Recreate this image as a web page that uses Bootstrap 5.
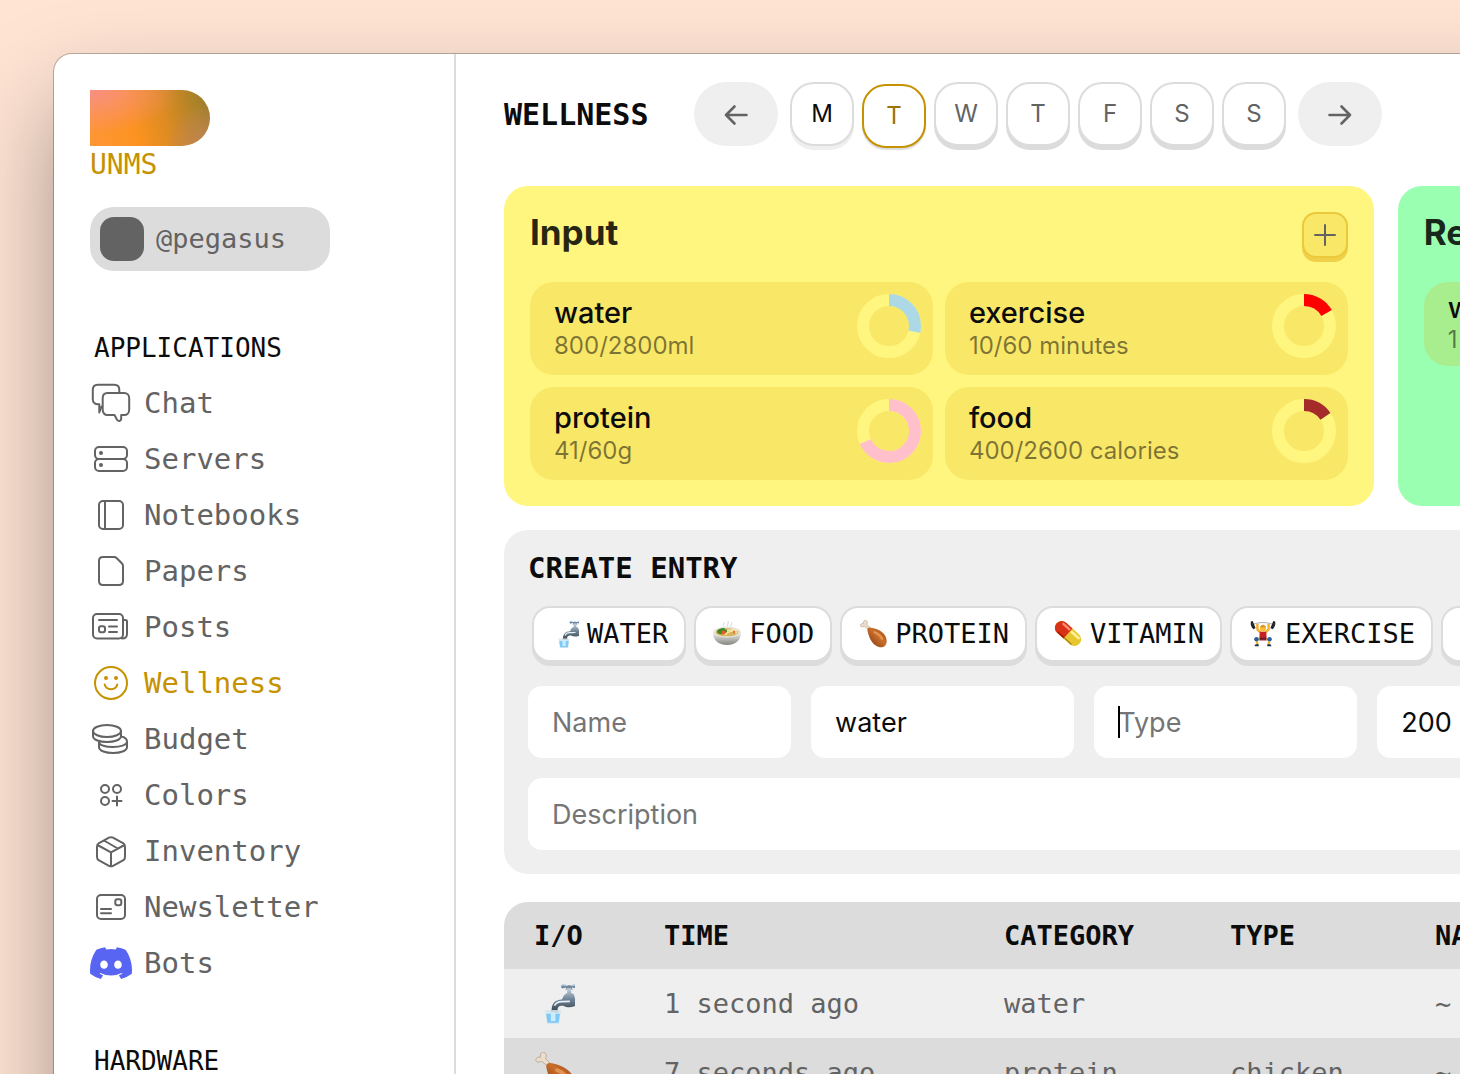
<!DOCTYPE html>
<html lang="en">
<head>
<meta charset="utf-8">
<meta name="viewport" content="width=device-width, initial-scale=1">
<title>Wellness</title>
<link href="https://cdn.jsdelivr.net/npm/bootstrap@5.3.0/dist/css/bootstrap.min.css" rel="stylesheet">
<style>
:root{--ink:#0c0c0c;--soft:#636363;--gold:#c69200;--line:#dcdcdc;--panel:#efefef}
html,body{height:100%}
body{background:#ffe4d4;color:var(--ink);font-family:Inter,"Liberation Sans",sans-serif;overflow:hidden}
.mono{font-family:"DejaVu Sans Mono","Liberation Mono",monospace}
/* the window runs past the right and bottom edges of the desktop */
.app-window{margin:54px 0 0 54px;width:154.9vw;min-height:calc(100vh + 100px);background:#fff;border-radius:18px 0 0 0;box-shadow:0 0 0 1px rgba(0,0,0,.25),0 48px 96px rgba(0,0,0,.36)}
.side-bar{width:402px;border-right:2px solid var(--line);padding:36px 36px 0}
.brand-shape{width:120px;height:56px;border-radius:0 28px 28px 0;background:radial-gradient(circle at 100% 100%,rgba(196,133,96,.9),transparent 34%),radial-gradient(ellipse 75% 80% at 0 0,#f8907d 8%,transparent),linear-gradient(75deg,#ff9634 5%,#fb921f 38%,#dc8b22 62%,#a98227 88%,#96782f)}
.brand-name{font-size:28px;line-height:38px;color:var(--gold)}
.user-pill{width:240px;height:64px;border-radius:24px;background:var(--line);color:var(--soft);font-size:27px;padding:10px;margin-top:23px}
.user-face{width:44px;height:44px;border-radius:14px;background:var(--soft)}
.side-title{font-size:26px;line-height:32px;font-weight:400;margin:0 4px 11px;padding-top:61px}
.side-title.hardware{padding-top:54px}
.side-nav .nav-link{font-size:29px;line-height:32px;height:56px;padding:0;color:var(--soft);gap:12px}
.side-nav .nav-link.active{color:var(--gold)}
.side-nav svg{width:42px;height:42px;fill:none;stroke:currentColor;stroke-width:2;stroke-linejoin:round;stroke-linecap:round}
.side-nav svg .solid{fill:currentColor;stroke:none}
.main-area{padding:28px 48px 0}
.page-title{font-size:30px;line-height:36px;font-weight:700;width:190px;padding-top:2px}
.arrow-btn{width:84px;height:64px;border:0;border-radius:32px;background:var(--panel);color:var(--soft)}
.arrow-btn svg,.add-btn svg{fill:none;stroke:currentColor;stroke-linecap:round;stroke-linejoin:round}
.day-btn{width:64px;height:64px;border:2px solid var(--line);border-radius:24px;background:#fff;color:var(--soft);font-size:24px;line-height:28px;padding:0;box-shadow:0 4px 0 var(--line)}
.day-btn.past{color:var(--ink);box-shadow:0 4px 0 var(--panel)}
.day-btn.current{color:#9d7400;border-color:var(--gold);box-shadow:0 2px 1px var(--line);transform:translateY(2px)}
.goal-card{border-radius:24px;padding:26px;height:320px}
.goal-card.yellow{background:#fff67f}
.goal-card.green{background:#9bffb1}
.goal-head{height:70px}
.goal-head h2{font-size:35px;line-height:40px;font-weight:700;color:rgba(0,0,0,.86);margin:0}
.add-btn{width:46px;height:46px;border:2px solid #ecc83b;border-radius:14px;background:#f9e768;color:var(--soft);padding:0;box-shadow:0 4px 0 #f0d048}
.goal-grid{display:grid;grid-template-columns:1fr 1fr;gap:12px}
.goal-item{border-radius:24px;background:#f9e768;padding:12px 12px 12px 24px;min-height:93px}
.goal-name{font-size:29px;line-height:38px;font-weight:500}
.goal-value{font-size:24px;line-height:28px;color:rgba(0,0,0,.5)}
.green .goal-item{background:#a8ee8f;min-height:84px;padding:10px 24px}
.green .goal-name{line-height:32px}
.green .goal-value{line-height:32px}
.entry-panel{background:var(--panel);border-radius:24px;padding:20px 24px 24px}
.entry-panel h2{font-size:29px;line-height:36px;font-weight:700;margin:0 0 20px}
.chip-btn{height:56px;border:2px solid var(--line);border-radius:18px;background:#fff;color:var(--ink);font-size:27px;line-height:32px;padding:0 16px 0 17px;box-shadow:0 4px 0 var(--line)}
.chip-btn svg{width:28px;height:28px}
.entry-fields{display:grid;grid-template-columns:repeat(5,1fr) 300px;gap:20px}
.entry-fields .form-control{height:72px;border:0;border-radius:14px;padding:0 24px;font-size:27px;color:var(--ink);background:#fff;box-shadow:none}
.entry-fields .form-control::placeholder{color:#757575}
.wide-field{grid-column:1/-1}
.text-caret{position:absolute;left:24px;top:20px;width:2px;height:32px;background:#000}
.log-wrap{border-radius:24px 24px 0 0;overflow:hidden}
.log-table{table-layout:fixed;width:100%;font-size:27px;line-height:36px;color:var(--soft)}
.log-table th,.log-table td{padding:0 30px;white-space:nowrap}
.log-table thead tr{height:67px;background:var(--line);color:var(--ink)}
.log-table tbody tr{height:69px;background:var(--panel)}
.log-table tbody tr:nth-child(even){background:var(--line)}
.log-table svg{width:41px;height:41px;display:block}
.c1{width:130px}.c2{width:340px}.c3{width:226px}.c4{width:205px}
</style>
<script src="https://cdn.jsdelivr.net/npm/bootstrap@5.3.0/dist/js/bootstrap.bundle.min.js"></script>
</head>
<body>
<svg class="position-absolute" width="0" height="0" aria-hidden="true">
 <defs>
  <linearGradient id="gSteel" x1="0" y1="0" x2="0" y2="1"><stop offset="0" stop-color="#c3d3e2"/><stop offset=".5" stop-color="#6f8396"/><stop offset="1" stop-color="#3d4750"/></linearGradient>
  <linearGradient id="gMeat" x1="0" y1="1" x2="1" y2="0"><stop offset="0" stop-color="#7c2f0b"/><stop offset=".55" stop-color="#c96f2c"/><stop offset="1" stop-color="#a04a16"/></linearGradient>
  <linearGradient id="gBowl" x1="0" y1="0" x2="0" y2="1"><stop offset="0" stop-color="#f2f2f0"/><stop offset="1" stop-color="#85857f"/></linearGradient>
 </defs>
 <symbol id="tap" viewBox="-4 0 28 28">
  <path d="M15 4.500h2l1-.5v-1l-2 .6c-2 .6-2-2.600 0-2.200l2.500.5 1.500-.5 1.500.5 2.500-.5c2-.4 2 2.800 0 2.200l-2-.6v1l1 .5" fill="#71889e"/>
  <path d="M15 1.300h2.500M22.500 1.300H25" stroke="#b5cce4" stroke-width="1"/>
  <path d="M18.500 3.500h3l-.2 3.200 2 1.200.7 2.600H29v5.400h-5.500c-2.500 1-5 1-7.500-.4-3-.2-3.800.6-4 3.500H8c0-4.800 2.200-7.500 7-7.700l1.500-3 2.200-1.600z" fill="url(#gSteel)"/>
  <path d="M10 15.500c1-2.300 3-3 5.500-2.800l5-.2" stroke="#e6f1fb" stroke-width="1.200" fill="none"/>
  <path d="M7.500 18.500h5v1.800h-5z" fill="#606c78"/><path d="M9 20h2.500v4H9z" fill="#9dd5fa"/>
  <path d="M3.500 18.500h11L13.200 28H4.900z" fill="#d5e5ed" opacity=".85"/><path d="M4.300 21h9.400l-.9 6.200H5.200z" fill="#7ec9f5"/><path d="M7.500 20h3.200v6H7.500z" fill="#c9ecff"/>
 </symbol>
 <symbol id="bowl" viewBox="0 0 28 28">
  <path d="M11 7c-2-2 1-3 0-5M15 7c-2-2 1-3 0-6M18.500 7c-2-2 1-3 0-5" stroke="#d6d6d6" fill="none"/>
  <path d="M0 12c0 8 5 13 14 13s14-5 14-13z" fill="url(#gBowl)"/><ellipse cx="14" cy="12" rx="14" ry="5.400" fill="#e8e7e2"/>
  <ellipse cx="14" cy="12.300" rx="11.500" ry="4" fill="#d9b35f"/><path d="M10 14c4-5 10-5 14-3M12 15c3-4 8-5 12-2" stroke="#fbe8ad" stroke-width="1.400" fill="none"/>
  <path d="M4 12c0-2.500 2-3 3.500-3.500 2-.9 4-.6 5 1 2 .4 2 2.500.5 3-2 2.400-8 2.400-9-.5z" fill="#43872a"/><circle cx="10.500" cy="12.500" r="1.900" fill="#e36322"/><circle cx="21" cy="12" r="1.300" fill="#d77434"/>
 </symbol>
 <symbol id="leg" viewBox="-1 0 28.500 28.500">
  <path d="M8.500 9.800 4.300 6.500C1.500 8-.8 6.300.8 4.300 2 3 3 3.700 3.500 3.800 3 1 5-.8 6.600.5c1.500 1.400.8 2.900.5 4.200L10.500 8z" fill="#e9ddcb" stroke="#b7a58f" stroke-width=".6"/>
  <path d="M7.500 10c0-1.500 1-2.600 2.700-2.400 6 .8 13.500 3.700 16 9.500 1.500 4 1.200 6.900-.7 9-2.300 2.300-6 2.200-9 .2C11 23 8.500 16 7.500 10z" fill="url(#gMeat)"/>
  <path d="M15 12.500c4 1.500 6 3.500 7.500 6.500" stroke="#efa563" stroke-width="2.500" stroke-linecap="round" fill="none" opacity=".7"/>
 </symbol>
 <symbol id="pill" viewBox="-1.500 -1 31 31">
  <g transform="rotate(42 14 14)"><rect x="-3" y="6.500" width="34" height="15" rx="7.500" fill="#e7c62f"/><path d="M14 6.500H4.500a7.500 7.500 0 0 0 0 15H14z" fill="#d83217"/><path d="M3 9.500h9" stroke="#ff8f78" stroke-width="2.500" stroke-linecap="round"/><path d="M16 10h10" stroke="#fff29a" stroke-width="3" stroke-linecap="round"/><path d="M4 20.300h10" stroke="#9d1d0c" stroke-width="1.500"/><path d="M14 20.300h11" stroke="#a98912" stroke-width="1.500"/></g>
 </symbol>
 <symbol id="lift" viewBox="-1 0 30 30">
  <path d="M3 5c6-3 16-3 22 0" stroke="#a2a7ab" fill="none"/><path d="M1 1.500 3 1l3 7.500-2 1.500C1.500 8 .3 5 1 1.500zM27 1.500 25 1l-3 7.500 2 1.500c2.500-2 3.700-5 3-8.500z" fill="#24272c"/>
  <path d="M8 4v6l4 4M20 4v6l-4 4" stroke="#f4b02b" stroke-width="2.600" fill="none" stroke-linejoin="round"/><circle cx="14" cy="9" r="3.200" fill="#f8bd34"/><path d="M11 8c0-4 6-4 6 0z" fill="#e0942a"/>
  <path d="M10.500 12.500h7L18 22h-8z" fill="#c42127"/><path d="M10.500 19h7v2h-7z" fill="#5d2028"/><path d="M10 20.500H6.500l1.700 5.500M18 20.500h3.500L19.800 26" stroke="#f4b02b" stroke-width="2.400" fill="none"/><circle cx="7" cy="20.500" r="2.400" fill="#2461a4"/><circle cx="21" cy="20.500" r="2.400" fill="#2461a4"/>
  <path d="M5 28c0-2 3-3 4.500-1.500V28zM23 28c0-2-3-3-4.500-1.500V28z" fill="#2a3140"/>
 </symbol>
</svg>

<div class="app-window d-flex">
 <aside class="side-bar mono flex-shrink-0">
  <a href="#" class="d-block text-decoration-none"><div class="brand-shape"></div><div class="brand-name">UNMS</div></a>
  <a href="#" class="user-pill d-flex align-items-center gap-2 text-decoration-none"><span class="user-face me-1"></span>@pegasus</a>
  <h2 class="side-title">APPLICATIONS</h2>
  <nav class="side-nav nav flex-column">
   <a class="nav-link d-flex align-items-center" href="#"><svg viewBox="0 0 42 42"><path d="M11.500 24.500 9.300 30.500V22.300H8c-3 0-5.200-2-5.200-5V7.700c0-3 2-5 5-5h16.500c3 0 5 2 5 5v3.300"/><path d="M17.500 11h16.700c3 0 5 2.200 5 5.200v11.500c0 3-2 5.300-5 5.300h-3v3.300c0 3.300-3.400 3.700-4.700.5L24.500 33h-7c-3 0-4.800-2.300-4.800-5.300V16.200c0-3 1.800-5.200 4.800-5.200z"/></svg>Chat</a>
   <a class="nav-link d-flex align-items-center" href="#"><svg viewBox="0 0 42 42"><rect x="5" y="9" width="32" height="12" rx="4"/><rect x="5" y="21" width="32" height="12" rx="4"/><circle class="solid" cx="11" cy="15" r="2"/><circle class="solid" cx="11" cy="27" r="2"/></svg>Servers</a>
   <a class="nav-link d-flex align-items-center" href="#"><svg viewBox="0 0 42 42"><rect x="9" y="7" width="24" height="28" rx="4"/><path d="M15 7v28"/></svg>Notebooks</a>
   <a class="nav-link d-flex align-items-center" href="#"><svg viewBox="0 0 42 42"><path d="M13 7h11c1 0 2 .4 2.800 1.200l5 5c.8.800 1.200 1.800 1.200 2.800v15c0 2.500-1.500 4-4 4H13c-2.500 0-4-1.500-4-4V11c0-2.500 1.500-4 4-4z"/></svg>Papers</a>
   <a class="nav-link d-flex align-items-center" href="#"><svg viewBox="0 0 42 42"><rect x="3" y="8" width="30" height="24.500" rx="4"/><path d="M33 14h2.500c1 0 1.500.6 1.500 1.500V28c0 3-2 4.500-5 4.500M9 14h18M19 20.500h8M19 26h8"/><rect x="9" y="20.300" width="6" height="6" rx="2"/></svg>Posts</a>
   <a class="nav-link active d-flex align-items-center" href="#" aria-current="page"><svg viewBox="0 0 42 42"><circle cx="21" cy="21" r="16"/><circle class="solid" cx="16" cy="16" r="2"/><circle class="solid" cx="26" cy="16" r="2"/><path d="M14.700 22.500c1.600 6.200 11 6.200 12.600 0"/></svg>Wellness</a>
   <a class="nav-link d-flex align-items-center" href="#"><svg viewBox="0 0 42 42"><ellipse cx="17" cy="13" rx="14" ry="6"/><path d="M3 13v5c0 8 28 8 28 0v-5M31 18.300c3.800 1 6 2.700 6 5.200 0 7.300-28 7.300-28 .5M9 24v5c0 8 28 8 28 0v-5.500"/></svg>Budget</a>
   <a class="nav-link d-flex align-items-center" href="#"><svg viewBox="0 0 42 42"><circle cx="15" cy="15" r="4"/><circle cx="27" cy="15" r="4"/><circle cx="15" cy="27" r="4"/><path d="M27 22.500v9M22.500 27h9"/></svg>Colors</a>
   <a class="nav-link d-flex align-items-center" href="#"><svg viewBox="0 0 42 42"><path d="M19 7.700c1.300-.7 2.700-.7 4 0l10 5.500c1.300.8 2 2 2 3.500v10.200c0 1.500-.7 2.700-2 3.400l-10 5.500c-1.300.7-2.700.7-4 0l-10-5.500c-1.300-.7-2-1.900-2-3.400V16.700c0-1.500.7-2.700 2-3.500zM7.500 15 21 22.300 34.500 15M21 22.300v14M14 10.500l13.700 8"/></svg>Inventory</a>
   <a class="nav-link d-flex align-items-center" href="#"><svg viewBox="0 0 42 42"><rect x="7" y="9" width="28" height="24" rx="4"/><rect x="25.300" y="13.300" width="6" height="6" rx="2"/><path d="M11 23h10M11 27.300h10"/></svg>Newsletter</a>
   <a class="nav-link d-flex align-items-center" href="#"><svg viewBox="0 -10 127.140 116"><path fill="#5865f2" stroke="none" d="M107.700,8.070A105.150,105.150,0,0,0,81.470,0a72.060,72.060,0,0,0-3.360,6.830A97.680,97.680,0,0,0,49,6.830,72.370,72.370,0,0,0,45.640,0,105.890,105.890,0,0,0,19.390,8.090C2.790,32.650-1.710,56.600.54,80.210h0A105.730,105.730,0,0,0,32.710,96.360,77.700,77.700,0,0,0,39.600,85.250a68.420,68.420,0,0,1-10.850-5.180c.91-.66,1.800-1.340,2.660-2a75.570,75.570,0,0,0,64.320,0c.87.710,1.760,1.390,2.660,2a68.680,68.680,0,0,1-10.870,5.190,77,77,0,0,0,6.890,11.100A105.250,105.250,0,0,0,126.600,80.220h0C129.240,52.840,122.090,29.110,107.700,8.070ZM42.450,65.690C36.180,65.690,31,60,31,53s5-12.740,11.430-12.740S54,46,53.890,53,48.840,65.690,42.450,65.690Zm42.240,0C78.410,65.690,73.250,60,73.250,53s5-12.740,11.440-12.740S96.230,46,96.120,53,91.080,65.690,84.690,65.690Z"/></svg>Bots</a>
  </nav>
  <h2 class="side-title hardware">HARDWARE</h2>
 </aside>

 <main class="main-area flex-grow-1">
  <header class="d-flex align-items-center">
   <h1 class="page-title mono mb-0">WELLNESS</h1>
   <button class="arrow-btn" type="button" aria-label="Previous week"><svg width="24" height="24" viewBox="0 0 24 24" stroke-width="2.600"><path d="M22.500 12H2M10.500 3.500 2 12l8.500 8.500"/></svg></button>
   <div class="d-flex gap-2 px-2 mx-1">
    <button class="day-btn past" type="button">M</button><button class="day-btn current" type="button">T</button><button class="day-btn" type="button">W</button><button class="day-btn" type="button">T</button><button class="day-btn" type="button">F</button><button class="day-btn" type="button">S</button><button class="day-btn" type="button">S</button>
   </div>
   <button class="arrow-btn" type="button" aria-label="Next week"><svg width="24" height="24" viewBox="0 0 24 24" stroke-width="2.600"><path d="M1.500 12H22M13.500 3.500 22 12l-8.500 8.500"/></svg></button>
  </header>

  <div class="row gx-4 pt-3 mt-4">
   <section class="col-6"><div class="goal-card yellow">
    <div class="goal-head d-flex justify-content-between align-items-start"><h2>Input</h2><button class="add-btn d-flex align-items-center justify-content-center" type="button" aria-label="Add input"><svg width="24" height="24" viewBox="0 0 24 24" stroke-width="2"><path d="M12 2v20M2 12h20"/></svg></button></div>
    <div class="goal-grid">
     <div class="goal-item d-flex justify-content-between"><div><div class="goal-name">water</div><div class="goal-value">800/2800ml</div></div><svg width="64" height="64" viewBox="0 0 64 64" fill="none" stroke-width="12"><circle cx="32" cy="32" r="26" stroke="#fff67f"/><circle cx="32" cy="32" r="26" stroke="#add8e6" pathLength="100" stroke-dasharray="28.600 100" transform="rotate(-90 32 32)"/></svg></div>
     <div class="goal-item d-flex justify-content-between"><div><div class="goal-name">exercise</div><div class="goal-value">10/60 minutes</div></div><svg width="64" height="64" viewBox="0 0 64 64" fill="none" stroke-width="12"><circle cx="32" cy="32" r="26" stroke="#fff67f"/><circle cx="32" cy="32" r="26" stroke="#f00" pathLength="100" stroke-dasharray="16.700 100" transform="rotate(-90 32 32)"/></svg></div>
     <div class="goal-item d-flex justify-content-between"><div><div class="goal-name">protein</div><div class="goal-value">41/60g</div></div><svg width="64" height="64" viewBox="0 0 64 64" fill="none" stroke-width="12"><circle cx="32" cy="32" r="26" stroke="#fff67f"/><circle cx="32" cy="32" r="26" stroke="#ffc0cb" pathLength="100" stroke-dasharray="68.300 100" transform="rotate(-90 32 32)"/></svg></div>
     <div class="goal-item d-flex justify-content-between"><div><div class="goal-name">food</div><div class="goal-value">400/2600 calories</div></div><svg width="64" height="64" viewBox="0 0 64 64" fill="none" stroke-width="12"><circle cx="32" cy="32" r="26" stroke="#fff67f"/><circle cx="32" cy="32" r="26" stroke="#a52a2a" pathLength="100" stroke-dasharray="15.400 100" transform="rotate(-90 32 32)"/></svg></div>
    </div>
   </div></section>
   <section class="col-6"><div class="goal-card green">
    <div class="goal-head"><h2>Results</h2></div>
    <div class="goal-grid"><div class="goal-item"><div class="goal-name">weight</div><div class="goal-value">1 entry</div></div></div>
   </div></section>
  </div>

  <form class="entry-panel mt-4">
   <h2 class="mono">CREATE ENTRY</h2>
   <div class="d-flex gap-2 ms-1 mb-4 mono">
    <button class="chip-btn d-flex align-items-center gap-2" type="button"><svg><use href="#tap"/></svg>WATER</button>
    <button class="chip-btn d-flex align-items-center gap-2" type="button"><svg><use href="#bowl"/></svg>FOOD</button>
    <button class="chip-btn d-flex align-items-center gap-2" type="button"><svg><use href="#leg"/></svg>PROTEIN</button>
    <button class="chip-btn d-flex align-items-center gap-2" type="button"><svg><use href="#pill"/></svg>VITAMIN</button>
    <button class="chip-btn d-flex align-items-center gap-2" type="button"><svg><use href="#lift"/></svg>EXERCISE</button>
    <button class="chip-btn d-flex align-items-center gap-2" type="button"><svg></svg>WEIGHT</button>
   </div>
   <div class="entry-fields">
    <input class="form-control" type="text" placeholder="Name" aria-label="Name">
    <input class="form-control" type="text" value="water" aria-label="Category">
    <div class="position-relative"><input class="form-control" type="text" placeholder="Type" aria-label="Type"><span class="text-caret"></span></div>
    <input class="form-control" type="text" value="200" aria-label="Amount">
    <input class="form-control wide-field" type="text" placeholder="Description" aria-label="Description">
   </div>
  </form>

  <div class="log-wrap mono mt-4 pt-1"><div class="log-wrap">
   <table class="log-table">
    <colgroup><col class="c1"><col class="c2"><col class="c3"><col class="c4"><col></colgroup>
    <thead><tr><th>I/O</th><th>TIME</th><th>CATEGORY</th><th>TYPE</th><th>NAME</th></tr></thead>
    <tbody>
     <tr><td><svg><use href="#tap"/></svg></td><td>1 second ago</td><td>water</td><td></td><td>~</td></tr>
     <tr><td><svg><use href="#leg"/></svg></td><td>7 seconds ago</td><td>protein</td><td>chicken</td><td>~</td></tr>
    </tbody>
   </table>
  </div></div>
 </main>
</div>
</body>
</html>
